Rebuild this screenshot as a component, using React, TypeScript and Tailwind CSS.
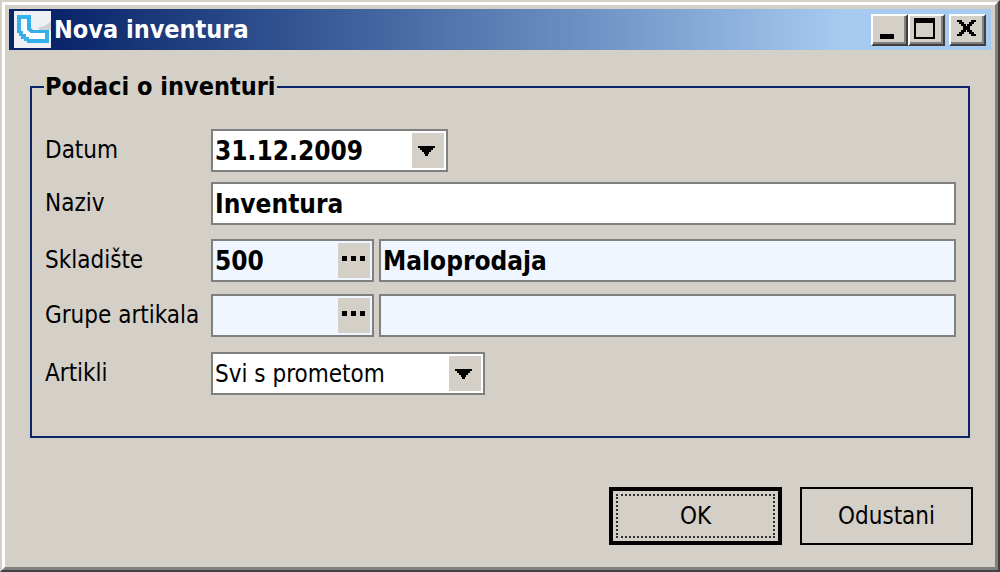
import type { ReactNode } from 'react';

const FIELD = 'flex h-[43px] items-stretch border-2 border-[#808080]';
const BOLD_INPUT =
  'min-w-0 flex-1 bg-transparent pl-0.5 text-[26px] leading-[36px] font-bold text-black outline-none';
const FIELD_BUTTON =
  'my-0.5 mr-0.5 flex w-8 shrink-0 items-center justify-center bg-[#d4d0c8] pr-1';

function TitleButton({ label, children }: { label: string; children: ReactNode }) {
  return (
    <button
      type="button"
      aria-label={label}
      className="flex h-8 w-[37px] items-center justify-center border-2 border-t-white border-r-[#404040] border-b-[#404040] border-l-white bg-[#d4d0c8] pr-[3px] pb-0.5 shadow-[inset_-2px_-2px_0_#808080]"
    >
      {children}
    </button>
  );
}

function Arrow() {
  return (
    <svg viewBox="0 0 17 10" className="h-[10px] w-[17px]" aria-hidden="true">
      <path d="M0 0H17V2H15V4H13V6H11V8H10V10H7V8H6V6H4V4H2V2H0Z" fill="#000" />
    </svg>
  );
}

function LookupButton({ label }: { label: string }) {
  return (
    <button type="button" aria-label={label} className="my-0.5 mr-0.5 flex w-8 shrink-0 items-center justify-center bg-[#d4d0c8]">
      <svg viewBox="0 0 24 6" className="mb-1 h-[6px] w-6" aria-hidden="true">
        <path d="M0 0H5V5H0ZM9 0H14V5H9ZM18 0H23V5H18Z" fill="#000" />
      </svg>
    </button>
  );
}

export default function App() {
  return (
    <main className="flex min-h-screen flex-col border-2 border-t-[#d4d0c8] border-r-[#404040] border-b-[#404040] border-l-[#d4d0c8] bg-[#d4d0c8] font-['DejaVu_Sans_Condensed','DejaVu_Sans',sans-serif] text-black">
      <div className="flex flex-1 flex-col border-[3px] border-t-white border-r-[#808080] border-b-[#808080] border-l-white p-1">
        <header className="flex h-[41px] items-center bg-linear-to-r from-[#0a246a] from-5% to-[#a6caf0] to-85% px-[5px]">
          <svg viewBox="0 0 37 37" className="size-[37px] shrink-0" aria-hidden="true">
            <rect width="37" height="37" fill="#eef0f4" />
            <path d="M25 16Q31 16 37 10V19H25Z" fill="#cfd2d6" />
            <path d="M3 4H17V17L19 19H35V32H13V30H10V28H7V25H5V22H3Z" fill="#35b0ea" />
            <path d="M7 8H13V19L17 22H31V28H15V26H12V23H9V20H7Z" fill="#fff" />
          </svg>
          <h1 className="ml-[3px] flex-1 text-[25px] leading-[36px] font-bold text-white">Nova inventura</h1>
          <div className="flex">
            <TitleButton label="Minimize">
              <svg viewBox="0 0 22 22" className="size-[22px]" aria-hidden="true">
                <path d="M3 16H17V21H3Z" fill="#000" />
              </svg>
            </TitleButton>
            <TitleButton label="Maximize">
              <svg viewBox="0 0 22 22" className="size-[22px]" aria-hidden="true">
                <path fillRule="evenodd" d="M0 0H21V21H0ZM2 5V19H19V5Z" fill="#000" />
              </svg>
            </TitleButton>
          </div>
          <div className="ml-1 flex">
            <TitleButton label="Close">
              <svg viewBox="0 0 22 22" className="size-[22px]" aria-hidden="true">
                <path d="M2 2H7V4H9V6H11V8H12V6H14V4H16V2H21V4H19V6H17V8H15V12H17V14H19V16H21V18H16V16H14V14H12V12H11V14H9V16H7V18H2V16H4V14H6V12H8V8H6V6H4V4H2Z" fill="#000" />
              </svg>
            </TitleButton>
          </div>
        </header>

        <form className="flex flex-1 flex-col px-[21px] pt-[22px]" onSubmit={(e) => e.preventDefault()}>
          <fieldset className="min-w-0 border-2 border-[#0a246a] px-3 pb-[41px]">
            <legend className="px-px text-[25px] leading-[30px] font-bold">Podaci o inventuri</legend>
            <div className="mt-[27px] grid grid-cols-[166px_minmax(0,1fr)] grid-rows-[53px_57px_55px_58px_43px] items-start pl-px text-[24px] leading-[43px]">
              <label htmlFor="datum">Datum</label>
              <div className={`${FIELD} w-[237px] bg-white`}>
                <input id="datum" defaultValue="31.12.2009" className={BOLD_INPUT} />
                <button type="button" aria-label="Otvori kalendar" className={FIELD_BUTTON}>
                  <Arrow />
                </button>
              </div>

              <label htmlFor="naziv">Naziv</label>
              <div className={`${FIELD} bg-white`}>
                <input id="naziv" defaultValue="Inventura" className={BOLD_INPUT} />
              </div>

              <label htmlFor="skladiste">Skladište</label>
              <div className="flex gap-[5px]">
                <div className={`${FIELD} w-[163px] shrink-0 bg-[#f0f6ff]`}>
                  <input id="skladiste" defaultValue="500" className={BOLD_INPUT} />
                  <LookupButton label="Odaberi skladište" />
                </div>
                <div className={`${FIELD} min-w-0 flex-1 bg-[#f0f6ff]`}>
                  <input aria-label="Naziv skladišta" defaultValue="Maloprodaja" className={BOLD_INPUT} />
                </div>
              </div>

              <label htmlFor="grupe">Grupe artikala</label>
              <div className="flex gap-[5px]">
                <div className={`${FIELD} w-[163px] shrink-0 bg-[#f0f6ff]`}>
                  <input id="grupe" className={BOLD_INPUT} />
                  <LookupButton label="Odaberi grupu artikala" />
                </div>
                <div className={`${FIELD} min-w-0 flex-1 bg-[#f0f6ff]`}>
                  <input aria-label="Naziv grupe artikala" className={BOLD_INPUT} />
                </div>
              </div>

              <label htmlFor="artikli">Artikli</label>
              <div className={`${FIELD} relative w-[274px] bg-white`}>
                <select id="artikli" className="w-full appearance-none bg-transparent pl-0.5 text-[24px] leading-[36px] outline-none">
                  <option>Svi s prometom</option>
                </select>
                <span className="pointer-events-none absolute inset-y-0.5 right-0.5 flex w-8 items-center justify-center bg-[#d4d0c8] pr-1">
                  <Arrow />
                </span>
              </div>
            </div>
          </fieldset>

          <div className="-mr-[3px] mt-[49px] flex justify-end gap-[18px] text-[24px] leading-[36px]">
            <button type="submit" className="h-[58px] w-[173px] border-4 border-black p-[3px]">
              <span className="flex h-full items-center justify-center border-2 border-dotted border-[#303030]">OK</span>
            </button>
            <button type="button" className="h-[58px] w-[173px] border-2 border-black">
              Odustani
            </button>
          </div>
        </form>
      </div>
    </main>
  );
}
